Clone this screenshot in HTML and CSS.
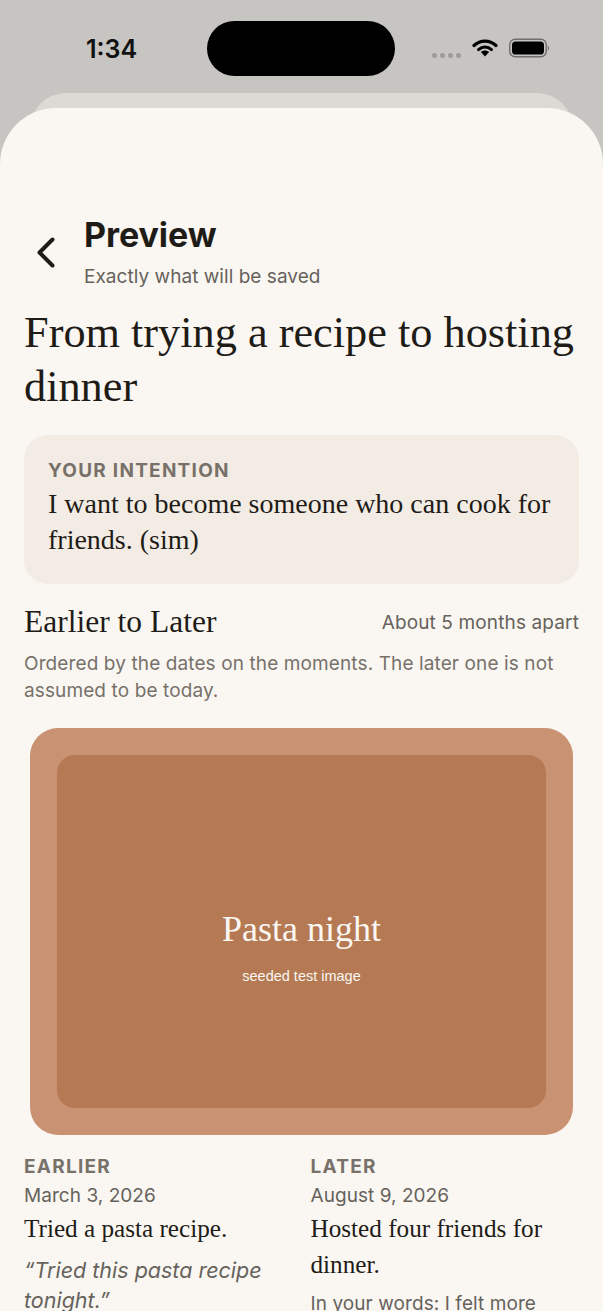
FILE: index.html
```html
<!DOCTYPE html>
<html lang="en">
<head>
<meta charset="utf-8">
<title>Preview</title>
<link rel="stylesheet" href="styles.css">
</head>
<body>
<div class="phone">
  <div class="status">
    <span class="time">1:34</span>
    <div class="island"></div>
    <div class="status-icons">
      <div class="dots"><i></i><i></i><i></i><i></i></div>
      <svg class="wifi" width="26" height="19" viewBox="0 0 26 19"><path d="M2 7.5C8.5 1.7 17.5 1.7 24 7.5" fill="none" stroke="#000" stroke-width="3.2" stroke-linecap="round"/><path d="M6.5 11.6C10.5 8.2 15.5 8.2 19.5 11.6" fill="none" stroke="#000" stroke-width="3" stroke-linecap="round"/><path d="M8.9 14 13 18.4 17.1 14C14.6 12 11.4 12 8.9 14Z"/></svg>
      <svg class="battery" width="41" height="20" viewBox="0 0 41 20"><rect x="0.75" y="1.25" width="36.5" height="17.5" rx="5.4" fill="none" stroke="#6f6f6c" stroke-width="1.4"/><rect x="3" y="3.5" width="32" height="13" rx="3.6"/><path d="M38.8 7.4c1.6.5 1.6 4.7 0 5.2z" fill="#6f6f6c"/></svg>
    </div>
  </div>
  <div class="sheet-back"></div>
  <main class="sheet">
    <header class="nav">
      <svg class="back" width="22" height="32" viewBox="0 0 22 32"><path d="M17.5 3.5 4.5 16.5 17.5 29.5" fill="none" stroke="#1f1c18" stroke-width="4" stroke-linecap="round" stroke-linejoin="round"/></svg>
      <div class="nav-text">
        <h1>Preview</h1>
        <p>Exactly what will be saved</p>
      </div>
    </header>
    <h2 class="title">From trying a recipe to hosting dinner</h2>
    <section class="intention">
      <div class="label">YOUR INTENTION</div>
      <p>I want to become someone who can cook for friends. (sim)</p>
    </section>
    <div class="section-head">
      <h3>Earlier to Later</h3>
      <span>About 5 months apart</span>
    </div>
    <p class="note">Ordered by the dates on the moments. The later one is not assumed to be today.</p>
    <div class="image">
      <div class="image-inner">
        <div class="image-title">Pasta night</div>
        <div class="image-sub">seeded test image</div>
      </div>
    </div>
    <div class="moments">
      <article>
        <div class="label">EARLIER</div>
        <div class="date">March 3, 2026</div>
        <div class="what">Tried a pasta recipe.</div>
        <p class="quote">“Tried this pasta recipe tonight.”</p>
      </article>
      <article>
        <div class="label">LATER</div>
        <div class="date">August 9, 2026</div>
        <div class="what">Hosted four friends for dinner.</div>
        <p class="words">In your words: I felt more</p>
      </article>
    </div>
  </main>
</div>
</body>
</html>
```
FILE: styles.css
```css
* { box-sizing: border-box; }
html, body { margin: 0; height: 100%; }
body { overflow: hidden; background: #c6c5c1; font-family: Inter, sans-serif; }
.phone { position: relative; width: 603px; height: 1311px; overflow: hidden; }
.status { height: 93px; position: relative; padding: 21px 0 0 207px; }
.time { position: absolute; left: 86px; top: 33px; font: 600 25px/32px Inter, sans-serif; color: #111; }
.island { width: 188px; height: 55px; background: #000; border-radius: 28px; }
.status-icons { position: absolute; left: 432px; top: 38px; display: flex; align-items: center; }
.dots { display: flex; gap: 3px; margin: 15px 11px 0 0; }
.dots i { width: 5px; height: 5px; border-radius: 50%; background: #9c9b98; }
.wifi { margin-right: 11px; margin-top: -2px; }
.sheet-back { position: absolute; left: 30px; right: 30px; top: 93px; height: 40px; background: #dcdad5; border-radius: 36px 36px 0 0; }
.sheet { position: absolute; left: 0; right: 0; top: 108px; bottom: 0; background: #faf7f2; border-radius: 56px 56px 0 0; padding: 104px 24px 0; color: #1f1c18; overflow: hidden; }
.nav { display: flex; align-items: center; gap: 27px; margin-left: 10px; height: 78px; }
.back { flex: none; margin-top: 2px; margin-left: 1px; }
.nav h1 { margin: 0; font: 700 34px/46px Inter, sans-serif; letter-spacing: -0.05px; color: #1f1c18; }
.nav p { margin: 6px 0 0; font: 400 19px/26px Inter, sans-serif; color: #66625c; letter-spacing: 0.04px; }
.title { margin: 16px 0 0; font: 400 44.3px/54px "Liberation Serif", serif; color: #1f1c18; }
.intention { margin-top: 21px; background: #f3ece4; border-radius: 24px; padding: 24px 24px 0; height: 149px; }
.label { font: 700 19px/24px Inter, sans-serif; letter-spacing: 1.25px; color: #77716a; }
.intention p { margin: 3px 0 0; font: 400 28px/36px "Liberation Serif", serif; color: #1f1c18; }
.section-head { display: flex; justify-content: space-between; align-items: flex-start; margin-top: 20px; }
.section-head h3 { margin: 0; font: 400 31.5px/36px "Liberation Serif", serif; color: #1f1c18; }
.section-head span { margin-top: 6px; font: 400 19px/26px Inter, sans-serif; letter-spacing: 0.13px; color: #66625c; }
.note { margin: 10px 0 0; font: 400 19px/27px Inter, sans-serif; letter-spacing: 0.11px; color: #77716a; }
.image { margin: 24px 6px 0; height: 407px; padding: 27px; background: #c99272; border-radius: 28px; }
.image-inner { height: 353px; background: #b57a54; border-radius: 18px; display: flex; flex-direction: column; align-items: center; color: #faf7f2; padding-top: 152px; }
.image-title { font: 400 36px/44px "Liberation Serif", serif; }
.image-sub { margin-top: 16px; font: 400 14.5px/18px "Liberation Sans", sans-serif; }
.moments { display: grid; grid-template-columns: 1fr 1fr; gap: 18px; margin-top: 20px; }
.moments .label { margin-bottom: 2px; }
.date { font: 400 19px/30px Inter, sans-serif; letter-spacing: 0.05px; color: #66625c; }
.what { font: 400 25.2px/36px "Liberation Serif", serif; color: #1f1c18; }
.quote { margin: 8px 0 0; font: italic 400 21.5px/30px Inter, sans-serif; color: #66625c; }
.words { margin: 7px 0 0; font: 400 19px/28px Inter, sans-serif; letter-spacing: 0.08px; color: #66625c; }
```
